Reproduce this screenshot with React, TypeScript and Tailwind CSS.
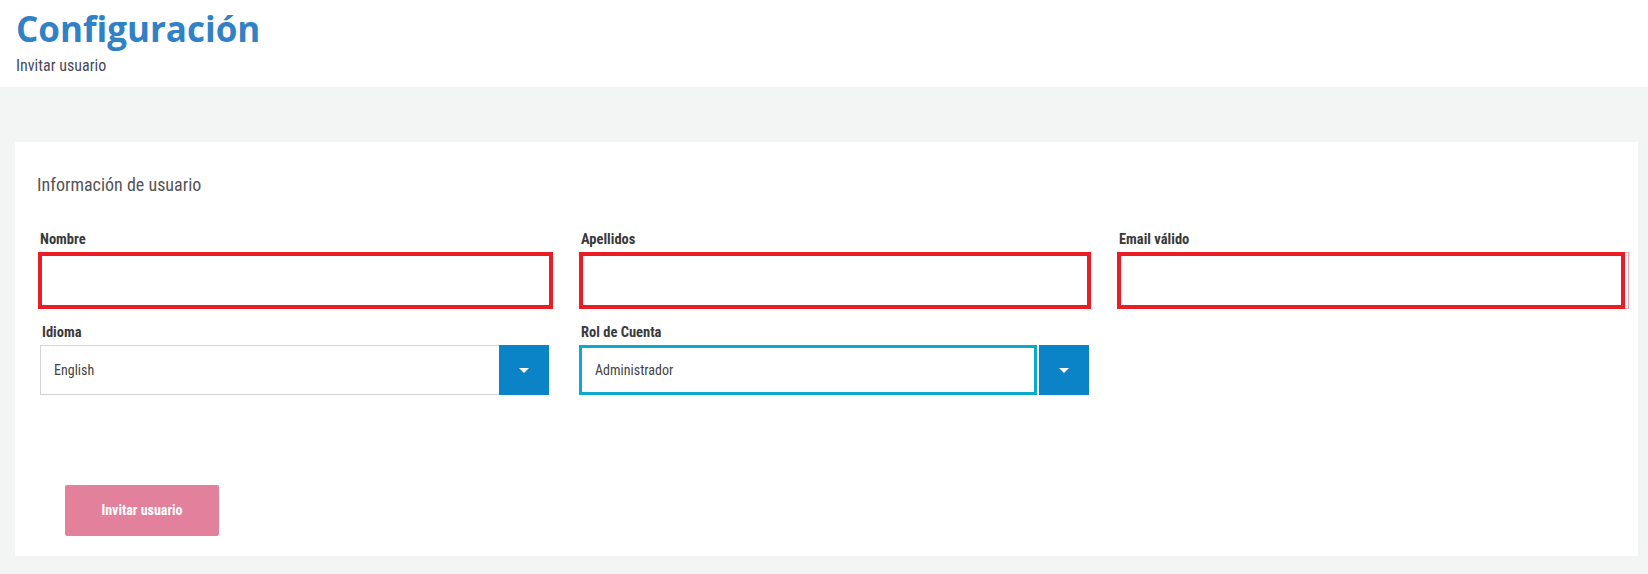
import React from "react";

const narrow = "font-['Liberation_Sans_Narrow','Roboto_Condensed','Arial_Narrow',Roboto,sans-serif]";

function Caret() {
  return (
    <svg width="10" height="5" viewBox="0 0 10 5" className="block">
      <path d="M0 0 L10 0 L5 5 Z" fill="#ffffff" />
    </svg>
  );
}

function Label({ children }: { children: React.ReactNode }) {
  return (
    <label className={`${narrow} block text-[14.5px] leading-[20px] font-bold text-[#3a3a3a] mb-[2px] pl-[2px]`}>
      {children}
    </label>
  );
}

function ErrorInput({ narrowBox }: { narrowBox?: boolean }) {
  return (
    <div className="relative h-[57px]">
      <input className="block w-full h-full border border-[#f3a3a8] bg-white outline-none" />
      <div
        className={
          "absolute top-0 bottom-0 left-0 border-4 border-[#ea1d25] pointer-events-none " +
          (narrowBox ? "right-[4px]" : "right-0")
        }
      />
    </div>
  );
}

function Select({ value, focused }: { value: string; focused?: boolean }) {
  return (
    <div className={focused ? "flex h-[50px] gap-[2px]" : "flex h-[50px]"}>
      <div
        className={
          focused
            ? "flex-1 flex items-center border-[3px] border-[#0aa9cd] pl-[13px] bg-white"
            : "flex-1 flex items-center border border-r-0 border-[#d4d4d4] pl-[13px] bg-white"
        }
      >
        <span className={`${narrow} text-[14px] text-[#444]`}>{value}</span>
      </div>
      <button className="w-[50px] bg-[#0a84c6] flex items-center justify-center">
        <Caret />
      </button>
    </div>
  );
}

export default function App() {
  return (
    <div className="w-[1648px] h-[574px] bg-[#f3f4f4] overflow-hidden">
      <div className="bg-white h-[87px] pl-[16px] pt-[7px]">
        <h1 className="font-['Open_Sans',sans-serif] font-bold text-[35px] leading-[44px] text-[#3181c6]">
          Configuración
        </h1>
        <p className={`${narrow} mt-[5px] text-[16px] leading-[20px] text-[#4a4a5c]`}>Invitar usuario</p>
      </div>

      <div className="ml-[15px] mt-[55px] w-[1623px] h-[414px] bg-white pt-[30px]">
        <h2 className={`${narrow} pl-[22px] text-[18px] leading-[26px] text-[#555]`}>Información de usuario</h2>

        <div className="mt-[32px] ml-[23px] grid grid-cols-[515px_512px_512px] gap-x-[26px] gap-y-[14px]">
          <div>
            <Label>Nombre</Label>
            <ErrorInput />
          </div>
          <div>
            <Label>Apellidos</Label>
            <ErrorInput />
          </div>
          <div>
            <Label>Email válido</Label>
            <ErrorInput narrowBox />
          </div>
          <div className="pl-[2px] pr-[4px]">
            <Label>Idioma</Label>
            <Select value="English" />
          </div>
          <div className="pr-[2px]">
            <Label>Rol de Cuenta</Label>
            <Select value="Administrador" focused />
          </div>
        </div>

        <div className="mt-[90px] ml-[50px]">
          <button className={`${narrow} w-[154px] h-[51px] rounded-[2px] bg-[#e3809b] text-white text-[14px] font-bold`}>
            Invitar usuario
          </button>
        </div>
      </div>
    </div>
  );
}
